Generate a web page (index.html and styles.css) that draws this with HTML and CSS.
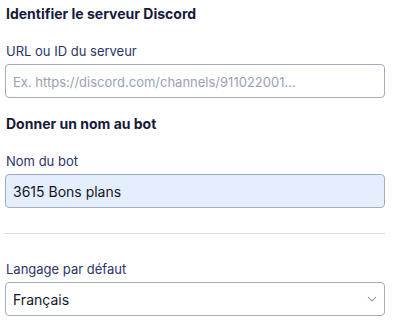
FILE: index.html
```html
<!DOCTYPE html>
<html lang="fr">
<head>
  <meta charset="UTF-8" />
  <title>Configuration du bot</title>
  <link rel="stylesheet" href="styles.css">
</head>
<body>
  <div class="panel">
    <h2>Identifier le serveur Discord</h2>
    <div class="field">
      <label for="server">URL ou ID du serveur</label>
      <input type="text" id="server" placeholder="Ex. https://discord.com/channels/911022001..." />
    </div>

    <h2 class="section">Donner un nom au bot</h2>
    <div class="field">
      <label for="botname">Nom du bot</label>
      <input type="text" id="botname" class="filled" value="3615 Bons plans" />
    </div>

    <hr class="divider" />

    <div class="field">
      <label for="lang">Langage par défaut</label>
      <div class="select-wrap">
        <select id="lang">
          <option>Français</option>
          <option>English</option>
        </select>
        <svg class="chevron" width="10" height="6" viewBox="0 0 10 6"><path d="M1 1l4 4 4-4" fill="none" stroke="#9aa1b5" stroke-width="1.1"/></svg>
      </div>
    </div>
  </div>
</body>
</html>
```

FILE: styles.css
```css
body {
  margin: 0;
  background: #fff;
  font-family: Inter, "Noto Sans", sans-serif;
  color: #1b1e3a;
}
.panel {
  padding: 4px 9px 0 5px;
}
h2 {
  margin: 0;
  font-size: 14px;
  line-height: 20px;
  font-weight: 700;
  padding-left: 1px;
  color: #171a3a;
}
h2.section {
  margin-top: 16px;
}
.field {
  margin-top: 18px;
}
.field label {
  display: block;
  font-size: 13px;
  line-height: 18px;
  color: #2b3467;
  padding-left: 1px;
  margin-bottom: 4px;
}
.field input, .field select {
  display: block;
  width: 100%;
  box-sizing: border-box;
  height: 34px;
  padding: 0 7px;
  border: 1px solid #a3abc2;
  border-radius: 4px;
  font-family: inherit;
  font-size: 14px;
  color: #14172a;
  background: #fff;
  outline: none;
}
.field input::placeholder {
  color: #9ba1b3;
  font-size: 13px;
}
.field input.filled {
  background: #e5eefc;
}
.divider {
  border: none;
  border-top: 1px solid #dadce3;
  margin: 25px 0 0;
}
.divider + .field {
  margin-top: 26px;
}
.select-wrap {
  position: relative;
}
.select-wrap select {
  appearance: none;
  -webkit-appearance: none;
}
.chevron {
  position: absolute;
  right: 8px;
  top: 14px;
  pointer-events: none;
}
```
